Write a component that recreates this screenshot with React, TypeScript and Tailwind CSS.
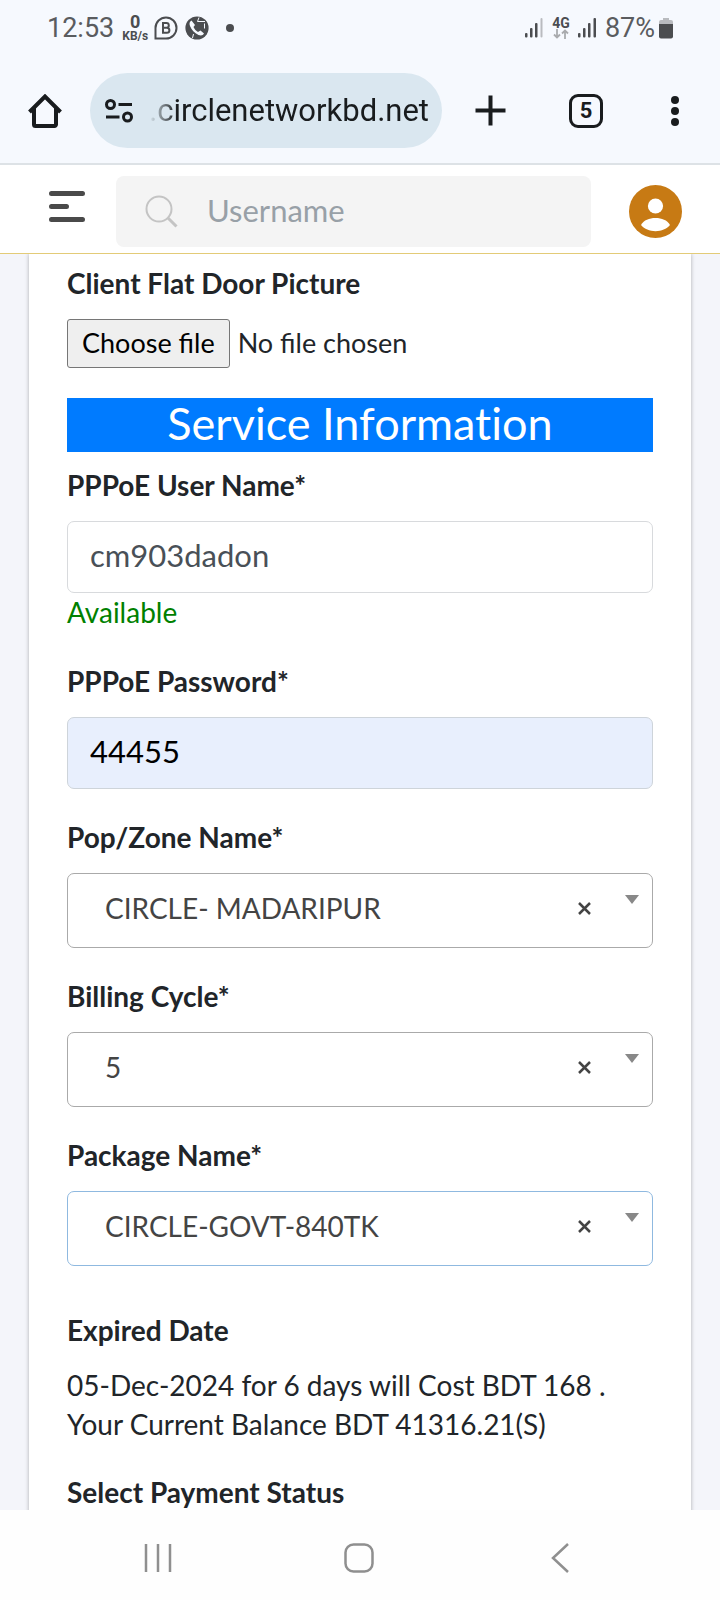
import React, { useRef, useState } from "react";

const StatusBar = () => (
  <div className="flex h-14 items-center justify-between pl-[47px] pr-[47px] font-[Roboto,sans-serif] text-[#4b4d50]">
    <div className="flex items-center">
      <span className="text-[27px] leading-8 text-[#5a5c5f]">12:53</span>
      <span className="ml-2 flex flex-col items-center text-[12px] font-bold leading-3">
        <span className="text-lg leading-4">0</span>
        <span>KB/s</span>
      </span>
      <svg viewBox="0 0 24 24" className="ml-1.5 size-6" fill="none">
        <path d="M1.500 22.500V12A10.500 10.500 0 1 1 12 22.500Z" stroke="currentColor" strokeWidth="2" />
        <path
          d="M9 7h3.400a2.400 2.400 0 0 1 0 4.800H9ZM9 11.800h3.900a2.500 2.500 0 0 1 0 5H9Z"
          stroke="currentColor"
          strokeWidth="2"
        />
      </svg>
      <svg viewBox="0 0 24 24" className="ml-[7px] size-6">
        <circle cx="12" cy="12" r="11.600" fill="currentColor" />
        <path
          d="M6.500 4.500c-2 1-2.500 3-1.500 5.500 1.500 4 4.500 7 8.500 9 2.500 1 4.500.500 5.500-1.500l-3.500-3-2.500 1.500c-2-1-3.500-2.800-4.500-5l1.500-2Z"
          fill="#f6f9fe"
        />
        <path d="M14 1.500 12.500 5.500H20M19.500 7.500v5M8.500 18 7.500 22" stroke="#f6f9fe" fill="none" />
      </svg>
      <span className="ml-[17px] size-2 rounded-full bg-current" />
    </div>
    <div className="flex items-center">
      <svg viewBox="0 0 18 20" className="h-5 w-[18px]" fill="currentColor">
        <rect x="0" y="15" width="2.500" height="4.500" rx="1" />
        <rect x="5" y="10" width="2.500" height="9.500" rx="1" />
        <rect x="10" y="5" width="2.500" height="14.500" rx="1" />
        <rect x="15.500" y="0" width="2" height="19.500" rx="1" fill="#b9bbbf" />
      </svg>
      <span className="ml-[9px] flex flex-col items-center">
        <span className="text-[14px] font-bold leading-3">4G</span>
        <svg viewBox="0 0 16 10" className="h-[10px] w-4" fill="none" stroke="#a9abae" strokeWidth="1.800">
          <path d="M4 0v8.500M1 5.500l3 3 3-3M12 10V1.500M9 4.500l3-3 3 3" />
        </svg>
      </span>
      <svg viewBox="0 0 18 20" className="ml-2 h-5 w-[18px]" fill="currentColor">
        <rect x="0" y="15" width="2.500" height="4.500" rx="1" />
        <rect x="5" y="10" width="2.500" height="9.500" rx="1" />
        <rect x="10" y="5" width="2.500" height="14.500" rx="1" />
        <rect x="15.500" y="0" width="2.500" height="19.500" rx="1" />
      </svg>
      <span className="ml-[9px] text-[27px] leading-8 text-[#5a5c5f]">87%</span>
      <svg viewBox="0 0 14 21" className="ml-1 h-[21px] w-[14px]">
        <path d="M4 0h6v2h2a2 2 0 0 1 2 2v3H0V4a2 2 0 0 1 2-2h2Z" fill="#b9bbbf" />
        <path d="M0 6h14v12.500a2 2 0 0 1-2 2H2a2 2 0 0 1-2-2Z" fill="currentColor" />
      </svg>
    </div>
  </div>
);

const BrowserBar = () => (
  <div className="flex h-[109px] items-center border-b-2 border-[#dde2e6] pl-7 pr-[37px] pt-0.5 text-[#191c1e]">
    <button aria-label="Home">
      <svg viewBox="0 0 34 34" className="size-[34px]" fill="none" stroke="currentColor" strokeWidth="4">
        <path d="M1.500 18 17 2.500 32.500 18" />
        <path d="M6 14v16.500a1.500 1.500 0 0 0 1.500 1.500h19a1.500 1.500 0 0 0 1.500-1.500V14" />
      </svg>
    </button>
    <div className="ml-7 flex h-[75px] min-w-0 flex-1 items-center rounded-full bg-[#dae7f0] pl-[15px] pr-3">
      <svg viewBox="0 0 28 24" className="h-6 w-7 shrink-0" fill="none" stroke="currentColor" strokeWidth="3">
        <circle cx="5.500" cy="5.500" r="4" />
        <path d="M13.500 5.500H27M1 18H14.500" />
        <circle cx="22.500" cy="18" r="4" />
      </svg>
      <input
        type="text"
        aria-label="Address"
        defaultValue=".circlenetworkbd.net"
        className="ml-4 w-full min-w-0 bg-transparent font-[Roboto,sans-serif] text-[31px] leading-10 outline-none [mask-image:linear-gradient(to_right,transparent,black_28px)]"
      />
    </div>
    <button aria-label="New tab" className="ml-[33px]">
      <svg viewBox="0 0 31 31" className="size-[31px]" fill="none" stroke="currentColor" strokeWidth="4">
        <path d="M15.500 .500v30M.500 15.500h30" />
      </svg>
    </button>
    <button
      aria-label="Tabs"
      className="ml-[63px] size-[34px] rounded-[9px] border-[3px] border-current text-center font-[Roboto,sans-serif] text-[22px] font-bold leading-7"
    >
      5
    </button>
    <button aria-label="More" className="ml-16">
      <svg viewBox="0 0 16 32" className="h-8 w-4" fill="currentColor">
        <circle cx="8" cy="5" r="4" />
        <circle cx="8" cy="16" r="4" />
        <circle cx="8" cy="27" r="4" />
      </svg>
    </button>
  </div>
);

const AppHeader = () => (
  <header className="flex h-[89px] shrink-0 items-center border-b border-[#e3cb77] bg-white pl-[49px] pr-[38px] pt-1">
    <button aria-label="Menu" className="pb-2.5">
      <svg viewBox="0 0 36 32" className="h-8 w-9" stroke="#4a4a4a" strokeWidth="5" strokeLinecap="round">
        <path d="M2.500 3.500h31M2.500 16.500h15M2.500 29.500h31" />
      </svg>
    </button>
    <label className="ml-[31px] flex h-[71px] min-w-0 flex-1 items-center rounded-lg bg-[#f4f4f4] pl-[29px]">
      <svg viewBox="0 0 33 33" className="size-[33px] shrink-0" fill="none" stroke="#c4c4c4" strokeWidth="2">
        <circle cx="14" cy="14" r="12.500" />
        <path d="m22.500 22.500 9 9" strokeWidth="3" />
      </svg>
      <input
        type="search"
        aria-label="Username"
        placeholder="Username"
        className="ml-[29px] w-full min-w-0 bg-transparent pb-0.5 text-[31px] outline-none placeholder:text-[#98a0a7]"
      />
    </label>
    <button aria-label="Account" className="ml-[38px]">
      <svg viewBox="0 0 53 53" className="size-[53px]">
        <circle cx="26.500" cy="26.500" r="26.500" fill="#c77a14" />
        <circle cx="26.500" cy="21" r="7.600" fill="#fff" />
        <path d="M12 40c3-5 8-7 14.500-7S38 35 41 40c-3.500 4-8.500 6.200-14.500 6.200S15.500 44 12 40Z" fill="#fff" />
      </svg>
    </button>
  </header>
);

interface FieldProps {
  id: string;
  label: string;
  children: React.ReactNode;
}

const Field: React.FC<FieldProps> = ({ id, label, children }) => (
  <div className="flex flex-col gap-4">
    <label htmlFor={id} className="text-[28px] font-bold leading-10">
      {label}
    </label>
    {children}
  </div>
);

interface SelectFieldProps {
  id: string;
  label: string;
  option: string;
  isActive?: boolean;
}

const SelectField: React.FC<SelectFieldProps> = ({ id, label, option, isActive = false }) => {
  const [value, setValue] = useState(option);

  return (
    <Field id={id} label={label}>
      <div className="relative">
        <select
          id={id}
          value={value}
          onChange={(e) => setValue(e.target.value)}
          className={`h-[75px] w-full appearance-none rounded-[7px] border bg-white pb-1.5 pl-[37px] pr-24 text-[28px] text-[#444] outline-none ${
            isActive ? "border-[#8fb9e0]" : "border-[#aaa]"
          }`}
        >
          <option value="" />
          <option value={option}>{option}</option>
        </select>
        <button
          type="button"
          aria-label={`Clear ${label}`}
          onClick={() => setValue("")}
          className="absolute right-[62px] top-[29px]"
        >
          <svg viewBox="0 0 13 13" className="size-[13px]" stroke="#444" strokeWidth="2.500">
            <path d="m1 1 11 11M12 1 1 12" />
          </svg>
        </button>
        <svg viewBox="0 0 14 9" className="pointer-events-none absolute right-[14px] top-[22px] h-[9px] w-[14px]">
          <path d="M0 0h14L7 9Z" fill="#888" />
        </svg>
      </div>
    </Field>
  );
};

const NavBar = () => (
  <nav className="grid h-[90px] shrink-0 grid-cols-3 items-center bg-[#fefefe] pl-[57px] pr-[59px] pt-1.5">
    <button aria-label="Recents" className="flex justify-center">
      <svg viewBox="0 0 30 30" className="size-[30px]" stroke="#8f8f8f" strokeWidth="2.500">
        <path d="M3 1v28M15 1v28M27 1v28" />
      </svg>
    </button>
    <button aria-label="Home screen" className="flex justify-center">
      <svg viewBox="0 0 30 30" className="size-[30px]" fill="none" stroke="#8f8f8f" strokeWidth="2.500">
        <rect x="1.500" y="1.500" width="27" height="27" rx="8" />
      </svg>
    </button>
    <button aria-label="Back" className="flex justify-center">
      <svg viewBox="0 0 30 30" className="size-[30px]" fill="none" stroke="#8f8f8f" strokeWidth="2.500">
        <path d="M23 1 8 15l15 14" />
      </svg>
    </button>
  </nav>
);

export default function App() {
  const fileInput = useRef<HTMLInputElement>(null);
  const [fileName, setFileName] = useState("No file chosen");

  return (
    <div className="flex h-screen flex-col overflow-hidden bg-[#f4f5fa] font-[Lato,sans-serif] text-[#212529]">
      <div className="shrink-0 bg-[#f6f9fe]">
        <StatusBar />
        <BrowserBar />
      </div>
      <AppHeader />
      <main className="min-h-0 flex-1 overflow-hidden px-[29px]">
        <form className="bg-white px-[38px] pb-10 pt-[9px] shadow-[0_0_4px_rgba(0,0,0,0.3)]">
          <Field id="door-picture" label="Client Flat Door Picture">
            <div className="relative flex items-center gap-2 text-[27px]">
              <input
                ref={fileInput}
                id="door-picture"
                type="file"
                className="sr-only"
                onChange={(e) => setFileName(e.target.files?.[0]?.name ?? "No file chosen")}
              />
              <button
                type="button"
                onClick={() => fileInput.current?.click()}
                className="h-[49px] rounded-[3px] border border-[#767676] bg-[#efefef] px-[14px] pb-0.5 leading-10 text-black"
              >
                Choose file
              </button>
              <span>{fileName}</span>
            </div>
          </Field>

          <h2 className="mb-[13px] mt-[30px] bg-[#007bff] pb-1 text-center text-[45px] leading-[50px] text-white [font-variant-ligatures:no-common-ligatures]">
            Service Information
          </h2>

          <div className="flex flex-col gap-7">
            <div>
              <Field id="user-name" label="PPPoE User Name*">
                <input
                  id="user-name"
                  type="text"
                  defaultValue="cm903dadon"
                  className="h-[72px] w-full rounded-[7px] border border-[#d8dadd] px-[22px] pb-1 text-[31px] text-[#495057] outline-none"
                />
              </Field>
              <p className="text-[28px] leading-[38px] pb-0.5 text-[#008000]">Available</p>
            </div>
            <Field id="password" label="PPPoE Password*">
              <input
                id="password"
                type="text"
                defaultValue="44455"
                className="h-[72px] w-full rounded-[7px] border border-[#ced4da] bg-[#e8effd] px-[22px] pb-1 text-[31px] text-black outline-none"
              />
            </Field>
            <SelectField id="zone" label="Pop/Zone Name*" option="CIRCLE- MADARIPUR" />
            <SelectField id="billing" label="Billing Cycle*" option="5" />
            <SelectField id="package" label="Package Name*" option="CIRCLE-GOVT-840TK" isActive />
          </div>

          <h3 className="mt-11 text-[28px] font-bold leading-10">Expired Date</h3>
          <p className="mb-7 mt-4 text-[28px] leading-[39px]">
            05-Dec-2024 for 6 days will Cost BDT 168 .
            <br />
            Your Current Balance BDT 41316.21(S)
          </p>
          <h3 className="text-[28px] font-bold leading-10">Select Payment Status</h3>
        </form>
      </main>
      <NavBar />
    </div>
  );
}
